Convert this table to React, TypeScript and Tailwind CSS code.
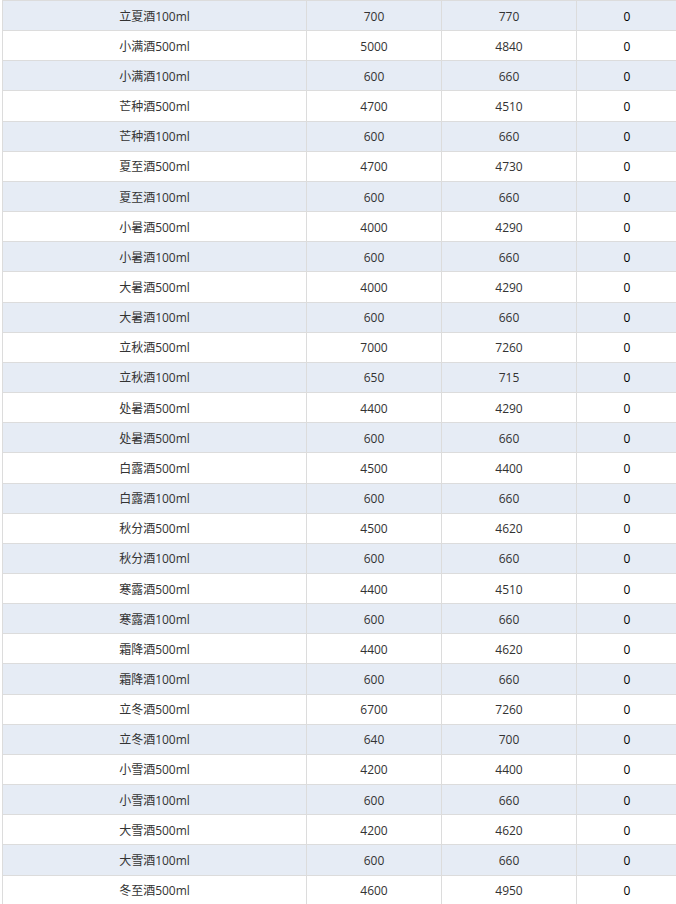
import React from "react";

const rows: [string, string, string, string][] = [
  ["立夏酒100ml", "700", "770", "0"],
  ["小满酒500ml", "5000", "4840", "0"],
  ["小满酒100ml", "600", "660", "0"],
  ["芒种酒500ml", "4700", "4510", "0"],
  ["芒种酒100ml", "600", "660", "0"],
  ["夏至酒500ml", "4700", "4730", "0"],
  ["夏至酒100ml", "600", "660", "0"],
  ["小暑酒500ml", "4000", "4290", "0"],
  ["小暑酒100ml", "600", "660", "0"],
  ["大暑酒500ml", "4000", "4290", "0"],
  ["大暑酒100ml", "600", "660", "0"],
  ["立秋酒500ml", "7000", "7260", "0"],
  ["立秋酒100ml", "650", "715", "0"],
  ["处暑酒500ml", "4400", "4290", "0"],
  ["处暑酒500ml", "600", "660", "0"],
  ["白露酒500ml", "4500", "4400", "0"],
  ["白露酒100ml", "600", "660", "0"],
  ["秋分酒500ml", "4500", "4620", "0"],
  ["秋分酒100ml", "600", "660", "0"],
  ["寒露酒500ml", "4400", "4510", "0"],
  ["寒露酒100ml", "600", "660", "0"],
  ["霜降酒500ml", "4400", "4620", "0"],
  ["霜降酒100ml", "600", "660", "0"],
  ["立冬酒500ml", "6700", "7260", "0"],
  ["立冬酒100ml", "640", "700", "0"],
  ["小雪酒500ml", "4200", "4400", "0"],
  ["小雪酒100ml", "600", "660", "0"],
  ["大雪酒500ml", "4200", "4620", "0"],
  ["大雪酒100ml", "600", "660", "0"],
  ["冬至酒500ml", "4600", "4950", "0"],
];

const App = () => {
  return (
    <div className="w-[676px] h-[904px] overflow-hidden bg-white pl-[2px] font-['Open_Sans','Noto_Sans_CJK_SC',sans-serif] text-[12px]">
      <div className="w-[676px] border-l border-[#dcdcdc]">
        {rows.map((r, i) => (
          <div
            key={i}
            className={`grid grid-cols-[304px_135px_135px_102px] h-[30.17px] border-t border-[#dcdcdc] ${i % 2 === 0 ? "bg-[#e6ecf5]" : "bg-white"}`}
          >
            <div className="flex items-center justify-center pt-[2px] border-r border-[#dcdcdc] text-[#333]">{r[0]}</div>
            <div className="flex items-center justify-center pt-[2px] border-r border-[#dcdcdc] text-[#333]">{r[1]}</div>
            <div className="flex items-center justify-center pt-[2px] border-r border-[#dcdcdc] text-[#333]">{r[2]}</div>
            <div className="flex items-center justify-center pt-[2px] pr-[2px] text-black">{r[3]}</div>
          </div>
        ))}
      </div>
    </div>
  );
};

export default App;
